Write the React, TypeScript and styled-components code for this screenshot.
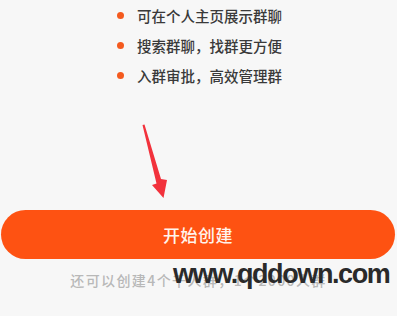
import React from "react";
import styled, { createGlobalStyle } from "styled-components";

const GlobalStyle = createGlobalStyle`
    html, body {
        margin: 0;
        padding: 0;
        background: #f7f7f7;
    }
    body {
        font-family: "Noto Sans CJK SC", "Liberation Sans", sans-serif;
    }
`;

const Page = styled.div`
    position: relative;
    width: 397px;
    height: 316px;
    overflow: hidden;
    background: #f7f7f7;
`;

const FeatureList = styled.ul`
    list-style: none;
    margin: 0;
    padding: 0 0 0 117px;
`;

const Feature = styled.li`
    display: flex;
    align-items: center;
    gap: 13px;
    height: 30px;
    font-size: 14.5px;
    font-weight: 500;
    color: #3a3a3a;
    &::before {
        content: "";
        width: 7px;
        height: 7px;
        border-radius: 50%;
        background: #f45a1e;
    }
`;

const Spacer = styled.div`
    height: 120px;
`;

const CreateButton = styled.button`
    display: flex;
    align-items: center;
    justify-content: center;
    width: 394px;
    height: 49px;
    margin: 0 0 0 1px;
    border: none;
    border-radius: 25px;
    background: #fe5212;
    color: #fff4ec;
    font-family: "Noto Sans CJK SC", sans-serif;
    font-size: 17px;
    font-weight: 500;
    letter-spacing: 0.5px;
`;

const Hint = styled.p`
    margin: 11px 0 0;
    text-align: center;
    font-size: 14px;
    font-weight: 500;
    color: #b8b8b8;
    letter-spacing: 1.4px;
`;

// red annotation arrow drawn over the page
const Arrow = styled.svg`
    position: absolute;
    left: 138px;
    top: 122px;
`;

const Watermark = styled.div`
    position: absolute;
    left: 173px;
    top: 258px;
    font-family: "Liberation Sans", Arial, sans-serif;
    font-weight: bold;
    font-size: 27px;
    letter-spacing: -1.4px;
    line-height: 32px;
    color: #2a2a2a;
`;

const features = ["可在个人主页展示群聊", "搜索群聊，找群更方便", "入群审批，高效管理群"];

export default function App() {
    return (
        <Page>
            <GlobalStyle />
            <FeatureList>
                {features.map((f) => (
                    <Feature key={f}>{f}</Feature>
                ))}
            </FeatureList>
            <Spacer />
            <CreateButton>开始创建</CreateButton>
            <Hint>还可以创建4个千人群，1个2000人群</Hint>
            <Arrow width="40" height="80" viewBox="0 0 40 80">
                <path d="M4.5 3 L6.5 2.5 L23 57 L29 58 L25.5 76 L14 63 L18.5 61.5 Z" fill="#f2323c" />
            </Arrow>
            <Watermark>www.qddown.com</Watermark>
        </Page>
    );
}
